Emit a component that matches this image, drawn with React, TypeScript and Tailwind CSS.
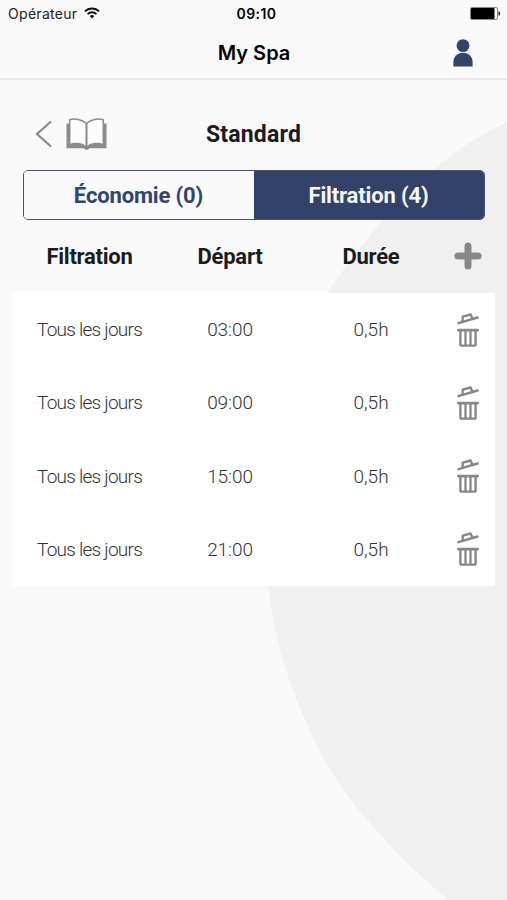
import type { ReactNode } from 'react';

const filtrations = [
    { days: 'Tous les jours', start: '03:00', duration: '0,5h' },
    { days: 'Tous les jours', start: '09:00', duration: '0,5h' },
    { days: 'Tous les jours', start: '15:00', duration: '0,5h' },
    { days: 'Tous les jours', start: '21:00', duration: '0,5h' },
];

function Row({ className, children }: { className: string; children: ReactNode }) {
    return (
        <div className={`grid grid-cols-[153px_128px_154px_40px] items-center justify-items-center whitespace-nowrap ${className}`}>
            {children}
        </div>
    );
}

function WifiIcon() {
    return (
        <svg className="ml-[7px] h-3 w-4" viewBox="0 0 16 12" fill="none" stroke="#111" strokeWidth="1.9">
            <path d="M1 4.4a10 10 0 0 1 14 0" />
            <path d="M3.6 7.1a6.3 6.3 0 0 1 8.8 0" />
            <path d="M8 11.4 5.7 9.1a3.3 3.3 0 0 1 4.6 0z" fill="#111" stroke="none" />
        </svg>
    );
}

function BatteryIcon() {
    return (
        <svg className="h-[13px] w-[31px]" viewBox="0 0 31 13">
            <rect x="0.5" y="0.5" width="27" height="12" rx="1.5" fill="#fff" stroke="#888" />
            <rect x="1" y="1" width="23.5" height="11" rx="0.8" fill="#000" />
            <path d="M28.5 4.2c2.2.6 2.2 4 0 4.6z" fill="#222" />
        </svg>
    );
}

function UserIcon() {
    return (
        <svg className="h-7 w-5" viewBox="0 0 20 28" fill="#33446b">
            <circle cx="10" cy="6.6" r="6.4" />
            <path d="M.4 27.4v-4.2c0-5 3.6-9.4 9.6-9.4s9.6 4.4 9.6 9.4v4.2z" />
        </svg>
    );
}

function BookIcon() {
    return (
        <svg className="h-8 w-[41px]" viewBox="0 0 41 32" fill="none" stroke="#8b8b8b" strokeWidth="1.5">
            <path d="M.5 5.5h3V27C9 25 15 25.5 20.5 29.5C26 25.5 32 25 37.5 27V5.5h3v24.8H23C22.5 32.3 18.5 32.3 18 30.3H.5z" fill="#8b8b8b" stroke="none" />
            <path d="M20.5 5.5C16 1.2 9 .2 3.7 1.8V26.6C9 24.6 16 25 20.5 29.4C25 25 32 24.6 37.3 26.6V1.8C32 .2 25 1.2 20.5 5.5z" fill="#fcfcfc" />
            <path d="M20.5 5.5V30" strokeWidth="2" />
        </svg>
    );
}

function TrashIcon() {
    return (
        <svg className="h-[34px] w-[22px]" viewBox="0 0 22 34" fill="none" stroke="#868788" strokeWidth="2.4" strokeLinecap="round" strokeLinejoin="round">
            <path d="M1.4 10.2 20.6 4.5" />
            <path d="M5.6 8.5 5.8 3.6 13.6 1.5 15.4 5.6" />
            <path d="M1.4 17.2H20.6" strokeWidth="2.8" />
            <path d="M3.4 18V31.2Q3.4 32.6 4.8 32.6H17.2Q18.6 32.6 18.6 31.2V18" />
            <path d="M8.5 18V32M13.5 18V32" strokeWidth="2.3" />
        </svg>
    );
}

export default function App() {
    return (
        <div className="relative isolate h-[900px] w-[507px] overflow-hidden bg-[#f9f9f9] font-['Roboto',sans-serif] text-[#1c1c1c]">
            <svg className="absolute inset-0 -z-10 h-full w-full" viewBox="0 0 507 900">
                <path
                    d="M507 122C481 134 457 150 436 168C413 187 393 207 375 230C357 251 341 272 328 292C282 365 258 470 268.3 587C275 648 296 706 323 757C351 809 402 860 448 900H507z"
                    fill="#f0f0f0"
                />
            </svg>

            <header className="h-20 border-b-2 border-[#e6e6e6] bg-[#f9f9f9] font-['Inter',sans-serif]">
                <div className="grid h-[26px] grid-cols-[1fr_auto_1fr] items-center pr-[6px] pl-[8px] text-[14px]">
                    <div className="flex items-center text-[#222]">
                        <span className="tracking-[0.3px]">Opérateur</span>
                        <WifiIcon />
                    </div>
                    <span className="pl-1 text-center font-semibold tracking-[0.4px] text-black">09:10</span>
                    <div className="flex justify-end">
                        <BatteryIcon />
                    </div>
                </div>
                <div className="grid h-[52px] grid-cols-[1fr_auto_1fr] items-center px-[34px] pt-[2px]">
                    <span />
                    <h1 className="pl-px text-[20px] font-semibold text-black">My Spa</h1>
                    <div className="flex justify-end">
                        <UserIcon />
                    </div>
                </div>
            </header>

            <main>
                <div className="grid h-[90px] grid-cols-[1fr_auto_1fr] items-center px-[35px] pt-[17px]">
                    <div className="flex items-center gap-[14px]">
                        <svg className="h-7 w-[17px]" viewBox="0 0 17 28" fill="none" stroke="#8b8b8b" strokeWidth="2.2">
                            <path d="M16 1.5 2 14 16 26.5" />
                        </svg>
                        <BookIcon />
                    </div>
                    <h2 className="pt-[3px] text-[23px] font-bold tracking-[0.2px]">Standard</h2>
                </div>

                <div className="mx-[22.5px] grid h-[50px] grid-cols-2 overflow-hidden rounded-[5px] border border-[#42537d] text-[22px] font-bold tracking-[-0.15px]">
                    <button className="bg-[#f9f9f9] text-[#33446f]">Économie (0)</button>
                    <button className="bg-[#324268] text-[#f4f6fa]">Filtration (4)</button>
                </div>

                <Row className="ml-[13px] h-[73px] text-[22px] font-bold tracking-[-0.25px]">
                    <span>Filtration</span>
                    <span>Départ</span>
                    <span>Durée</span>
                    <svg className="mb-px h-7 w-7" viewBox="0 0 28 28" stroke="#868788" strokeWidth="7" strokeLinecap="round">
                        <path d="M14 4V24M4 14H24" />
                    </svg>
                </Row>

                <div className="mr-[12px] ml-[13px] bg-white text-[19px] text-[#333]">
                    {filtrations.map((item) => (
                        <Row key={item.start} className="h-[73.25px]">
                            <span className="pt-[1.5px] font-light tracking-[-0.75px]">{item.days}</span>
                            <span className="pt-[1.5px] font-light tracking-[-0.1px]">{item.start}</span>
                            <span className="pt-[1.5px] font-light">{item.duration}</span>
                            <TrashIcon />
                        </Row>
                    ))}
                </div>
            </main>
        </div>
    );
}
